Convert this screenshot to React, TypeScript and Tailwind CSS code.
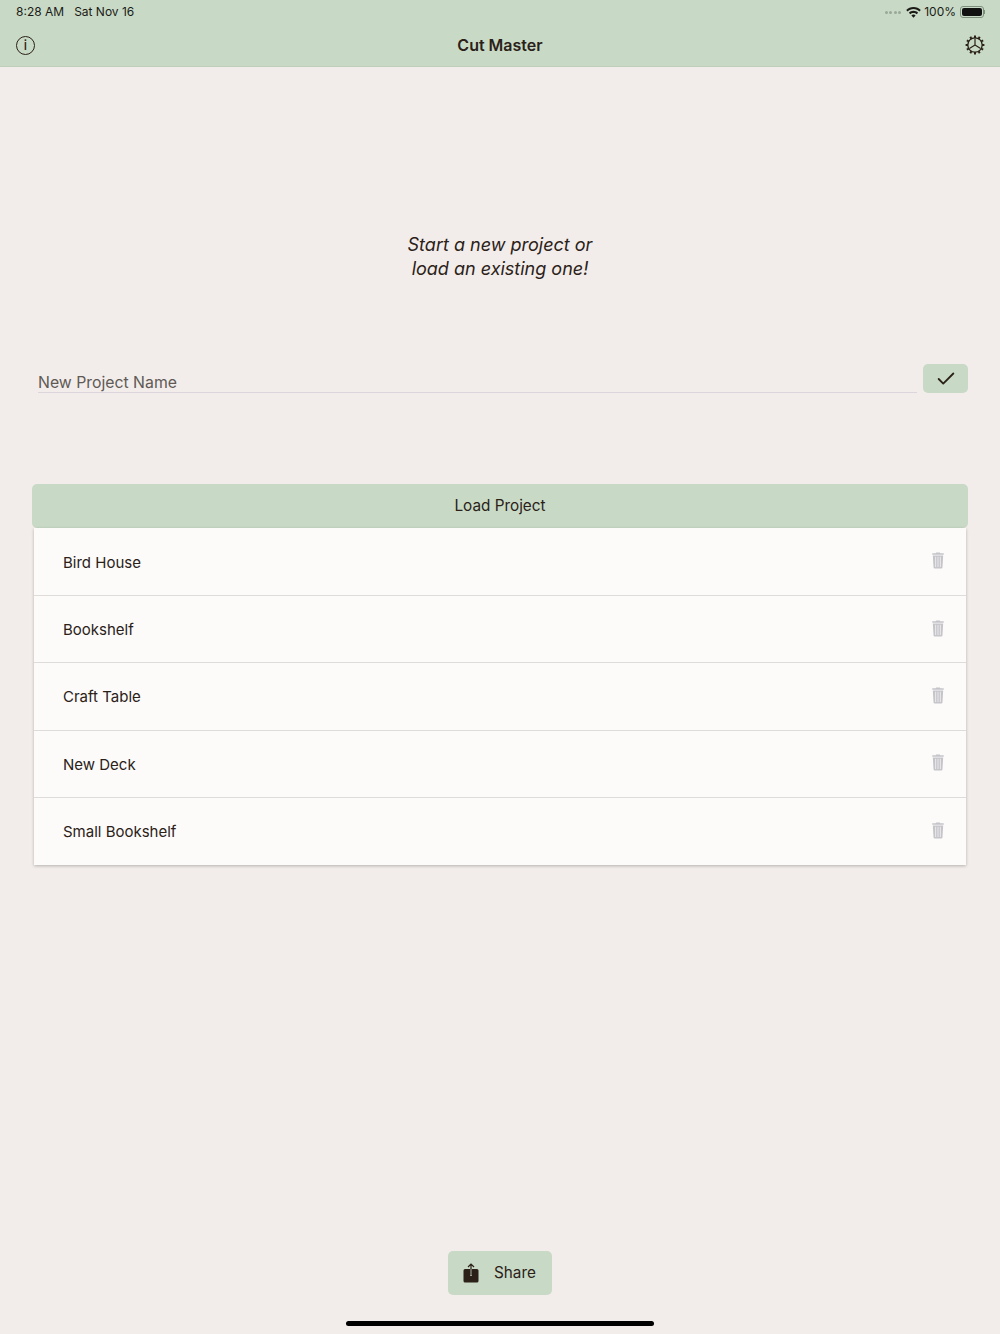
import { Check } from 'lucide-react';

const projects = ['Bird House', 'Bookshelf', 'Craft Table', 'New Deck', 'Small Bookshelf'];

function TrashIcon() {
  return (
    <svg width="12" height="17" viewBox="0.5 0 13 18" preserveAspectRatio="none" fill="none">
      <path d="M5 .4h4l.5 1H13.200v1.500H.8V1.400h3.700z" fill="#c4c4c9" />
      <path d="M1.400 3.600h11.200l-.8 12.800a1.300 1.300 0 0 1-1.300 1.200H3.500a1.300 1.300 0 0 1-1.300-1.200z" fill="#c4c4c9" />
      <path d="M4.500 5v11M7 5v11M9.500 5v11" stroke="#f0eff0" strokeWidth="1" />
    </svg>
  );
}

function GearIcon() {
  const teeth = Array.from({ length: 12 }, (_, i) => i * 30);
  return (
    <svg width="20" height="20" viewBox="0 0 20 20" fill="none" stroke="#2b2118">
      <circle cx="10" cy="10" r="7.200" strokeWidth="1.300" />
      <path d="M10 10V3.400M10 10l5.600 3.400M10 10l-5.600 3.400" strokeWidth="1.200" />
      {teeth.map((deg) => (
        <path key={deg} d="M10 .6v2.400" strokeWidth="2" transform={`rotate(${deg} 10 10)`} />
      ))}
    </svg>
  );
}

function WifiIcon() {
  return (
    <svg width="15" height="11" viewBox="0 0 15 11" fill="#1c1a16">
      <path d="M7.500 0C4.600 0 2.100 1.100.2 3l1.400 1.500C3.100 3 5.200 2.100 7.500 2.100s4.400.9 5.900 2.400L14.800 3C12.900 1.100 10.400 0 7.500 0z" />
      <path d="M7.500 3.800c-1.800 0-3.400.7-4.600 1.900l1.400 1.500c.8-.8 2-1.300 3.200-1.300s2.400.5 3.200 1.300l1.400-1.500c-1.200-1.200-2.800-1.900-4.600-1.900z" />
      <path d="M7.500 7.500c-.9 0-1.600.3-2.100.9l2.100 2.300 2.100-2.300c-.5-.6-1.200-.9-2.100-.9z" />
    </svg>
  );
}

function ShareIcon() {
  return (
    <svg width="16" height="20" viewBox="0 0 16 20" fill="none">
      <path d="M.5 7.500A1.500 1.500 0 0 1 2 6h5v7h2V6h5a1.500 1.500 0 0 1 1.500 1.500v10.500A1.500 1.500 0 0 1 14 19.500H2A1.500 1.500 0 0 1 .5 18z" fill="#2b2118" />
      <path d="M8 12.500V1M5 4 8 1l3 3" stroke="#2b2118" strokeWidth="1.200" />
    </svg>
  );
}

export default function App() {
  return (
    <div className="relative flex h-[1334px] w-[1000px] flex-col overflow-hidden bg-[#f2edea] font-['Inter','Liberation_Sans',sans-serif] text-[#2b2118]">
      <header className="h-[67px] shrink-0 border-b border-[#c0cfbc] bg-[#c8dac6]">
        <div className="flex h-[24px] items-center justify-between pl-4 pr-[15px] text-[12px] text-[#1c1a16]">
          <div className="flex gap-[10px]">
            <span>8:28 AM</span>
            <span>Sat Nov 16</span>
          </div>
          <div className="flex items-center">
            <div className="mr-[5px] flex gap-[1.500px]">
              {[0, 1, 2, 3].map((i) => (
                <span key={i} className="h-[3px] w-[3px] rounded-full bg-[#9aa89a]" />
              ))}
            </div>
            <WifiIcon />
            <span className="mr-[4px] ml-[3px]">100%</span>
            <div className="flex items-center">
              <div className="h-[12px] w-[24px] rounded-[3px] border border-[#7f8f7f] p-[1px]">
                <div className="h-full w-full rounded-[2px] bg-[#111111]" />
              </div>
              <div className="h-[4px] w-[1px] bg-[#7f8f7f]" />
            </div>
          </div>
        </div>
        <div className="flex h-[42px] items-center justify-between pl-4 pr-[15px]">
          <div className="flex h-[19px] w-[19px] items-center justify-center rounded-full border-[1.500px] border-[#2b2118] text-[13px] leading-none font-medium">
            i
          </div>
          <h1 className="text-[16px] font-semibold">Cut Master</h1>
          <GearIcon />
        </div>
      </header>

      <main className="flex flex-1 flex-col">
        <p className="mt-[166px] text-center text-[18px] leading-[23.500px] italic">
          Start a new project or
          <br />
          load an existing one!
        </p>

        <div className="mt-[84px] flex items-end pl-[38px] pr-[32px]">
          <div className="flex-1 border-b border-[#dcd6dc] text-[15.800px] leading-[19px] text-[#5f5a56]">
            New Project Name
          </div>
          <button className="ml-[6px] flex h-[29px] w-[45px] items-center justify-center rounded-[5px] bg-[#c8dac6]">
            <Check size={22} strokeWidth={2} color="#2b2118" />
          </button>
        </div>

        <section className="mt-[91px] px-[32px]">
          <div className="flex h-[44px] items-center justify-center rounded-[5px] bg-[#c8dac6] text-[15.300px]">Load Project</div>
          <ul className="mx-[2px] bg-[#fcfbf9] shadow-[0_1px_3px_rgba(0,0,0,0.25)]">
            {projects.map((name, i) => (
              <li
                key={name}
                className={`flex h-[67.200px] items-center justify-between pl-[29px] pr-[22px] text-[15px] leading-[24px] last:h-[68px] ${i > 0 ? 'border-t border-[#dedbd9]' : ''}`}
              >
                <span className="mt-[2px]">{name}</span>
                <span className="-mt-[2px]">
                  <TrashIcon />
                </span>
              </li>
            ))}
          </ul>
        </section>

        <div className="mt-auto mb-[39px] flex justify-center">
          <button className="flex h-[44px] w-[104px] items-center rounded-[5px] bg-[#c8dac6] pl-[15px] text-[15.300px]">
            <ShareIcon />
            <span className="ml-[15px]">Share</span>
          </button>
        </div>
      </main>

      <div className="absolute bottom-[8px] left-[346px] h-[5px] w-[308px] rounded-full bg-black" />
    </div>
  );
}
